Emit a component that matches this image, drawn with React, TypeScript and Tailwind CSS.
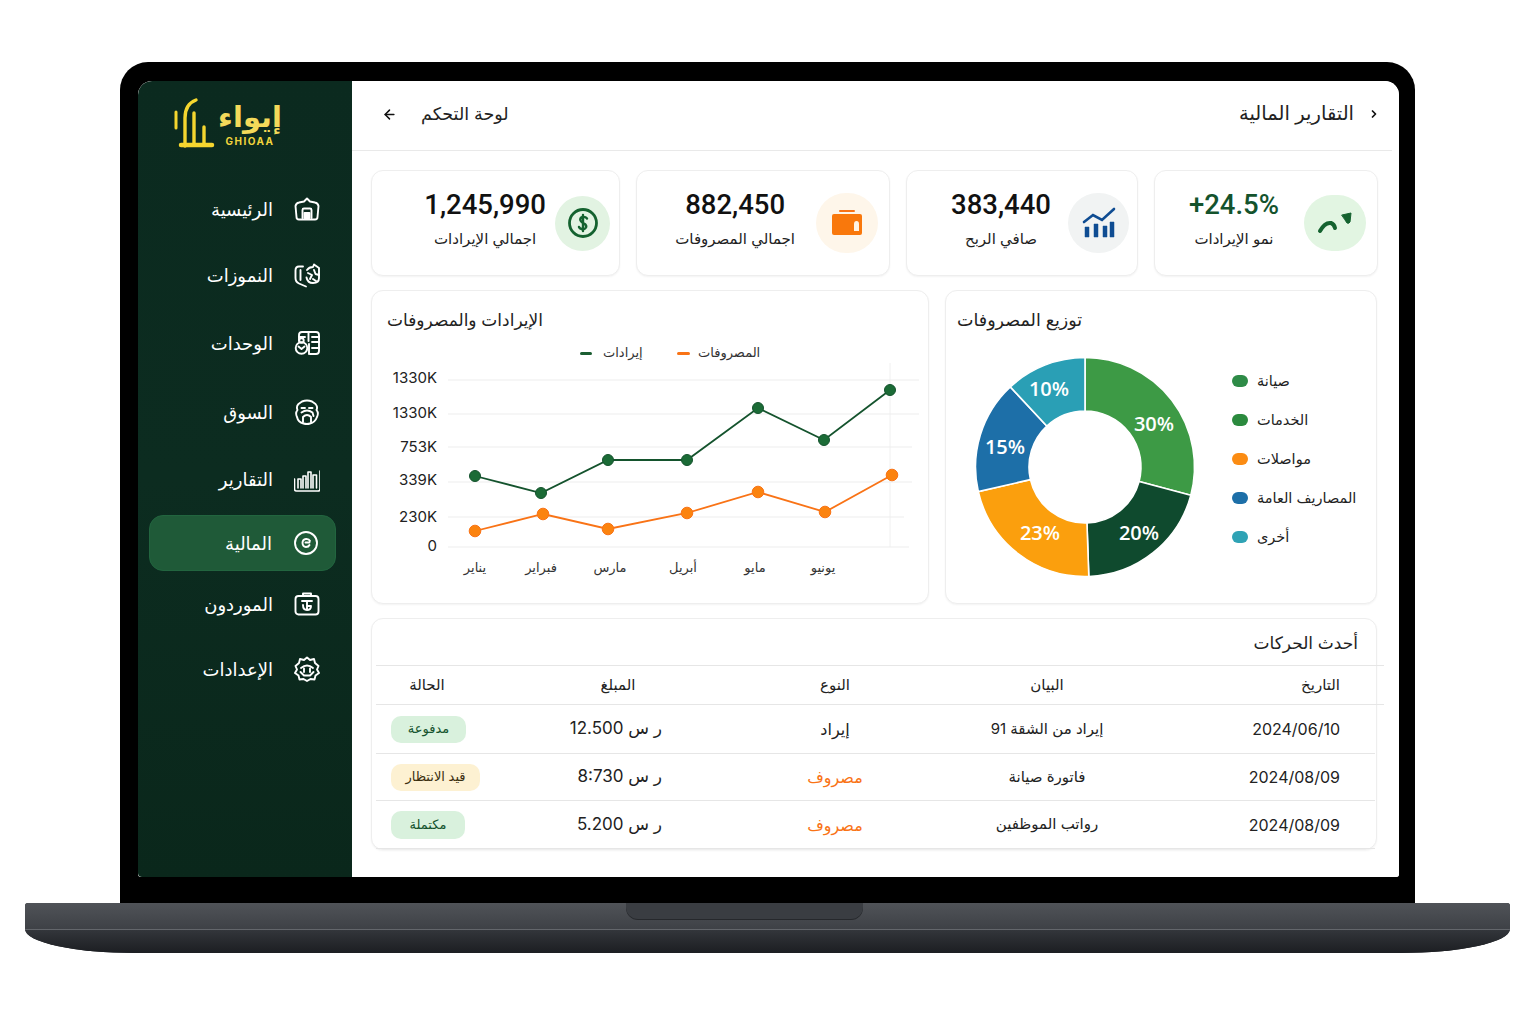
import type { ReactNode } from "react";
import { ArrowLeft, ChevronRight } from "lucide-react";

const navItems = [
  { label: "الرئيسية", icon: "store", row: "h-[64px] pb-[2px]" },
  { label: "النموزات", icon: "globe", row: "h-[66px]" },
  { label: "الوحدات", icon: "units", row: "h-[70px]" },
  { label: "السوق", icon: "market", row: "h-[68px]" },
  { label: "التقارير", icon: "bars", row: "h-[68px] pb-[2px]" },
  { label: "المالية", icon: "finance", row: "mt-px h-[56px] rounded-[14px] border border-[#22653f] bg-[#1f5a38]" },
  { label: "الموردون", icon: "suppliers", row: "h-[66px]" },
  { label: "الإعدادات", icon: "gear", row: "h-[64px]" },
];

function NavIcon({ name }: { name: string }) {
  const common = {
    width: 26,
    height: 26,
    viewBox: "0 0 26 26",
    fill: "none",
    stroke: "white",
    strokeWidth: 1.9,
    strokeLinecap: "round" as const,
    strokeLinejoin: "round" as const,
  };
  if (name === "store")
    return (
      <svg {...common}>
        <path d="M1.5 10Q2 7 5 6.5L10 5.5L13 2.5L16 5.5L21 6.5Q24 7 24.5 10L23.5 21Q23.5 23.5 21 23.5H5Q2.5 23.5 2.5 21Z" />
        <path d="M8.5 22V14Q8.5 12.5 10 12.5H16Q17.5 12.5 17.5 14V22" />
        <path d="M10.5 17H15.5V22H10.5Z" fill="white" />
      </svg>
    );
  if (name === "globe")
    return (
      <svg {...common}>
        <path d="M9 4.5H5Q1.5 4.5 1.5 8.5V16Q1.5 20 5 21.5L12 24.5" />
        <path d="M6.5 8V18" />
        <path d="M13 8Q15 5 19 5L20 2.5L25 6V16Q25 21 19 21Q13.5 21 12.5 15.5" />
        <path d="M14 11L18 13L16 17M20 8L21.5 12L25 13M19 17L22 19" />
      </svg>
    );
  if (name === "units")
    return (
      <svg {...common}>
        <path d="M5 11V5Q5 2 8 2H22Q25 2 25 5V21Q25 24 22 24H16" />
        <path d="M14.5 2V11M15 14V24M5 7H11M18 7H25M18 12H25M18 18H25" />
        <circle cx="7.5" cy="18" r="5.8" />
        <path d="M4.5 16.5L7.5 19L10.5 16.5" />
        <circle cx="7.5" cy="10.5" r="2.2" />
      </svg>
    );
  if (name === "market")
    return (
      <svg {...common}>
        <path d="M8 2.5Q13 0.5 18 2.5L21.5 5Q24 8 22.5 11Q25 14 23 18Q21 23.5 16 24.5Q13 25.5 9.5 24.5Q4 23 3 18Q1 14 3.5 11Q2 7.5 4.5 5Z" />
        <path d="M7.5 9H11M15 9H18.5M7.5 13.5Q13 9.5 18.5 13.5L19.5 17" />
        <path d="M9 23V18Q13 14 17 18V23" />
      </svg>
    );
  if (name === "bars")
    return (
      <svg {...common} strokeWidth={1.6}>
        <path d="M0.5 13V23Q0.5 25 2.5 25H24Q26 25 26 23V5" />
        <path d="M4 22V13H7V22M9 22V10H12V22M14 22V6H17V22M19 22V9H22.5V22" />
      </svg>
    );
  if (name === "finance")
    return (
      <svg {...common}>
        <circle cx="13" cy="13" r="11" />
        <path d="M17 11Q16 8.8 13 9Q9.5 9.5 9.5 13Q9.7 16.8 13 17Q15.5 17 16.5 15M12.5 12.5H16.5" />
      </svg>
    );
  if (name === "suppliers")
    return (
      <svg {...common}>
        <rect x="1.5" y="5" width="23" height="18.5" rx="3" />
        <path d="M9 5V2.5H17V5" />
        <path d="M8 10H18M13 10V19M9 14Q9 19 13 19Q17 19 17 15H13.5" />
      </svg>
    );
  return (
    <svg {...common}>
      <path d="M13 1.5L16 4L20 3L21 7L24.5 10L23 13.5L25 17L21.5 19.5L20.5 23.5L16.5 23L13 25L9.5 23L5.5 23.5L4.5 19.5L1 17L3 13.5L1.5 10L5 7L6 3L10 4Z" />
      <path d="M7 12Q13 7 19 12M6.5 16L10 19.5H16L19.5 16M10 12.5V16M16 12.5V16" />
    </svg>
  );
}

function Sidebar() {
  return (
    <aside className="flex w-[214px] shrink-0 flex-col rounded-tl-[14px] rounded-bl-[4px] bg-gradient-to-b from-[#0b2a1f] via-[#0c2c20] to-[#0a271b]">
      <div className="flex h-[97px] items-start pl-[34px] pt-[15px]">
        <svg width="44" height="56" viewBox="0 0 44 56" fill="none" stroke="#f5d62f" strokeLinecap="round">
          <path d="M4 16V32" strokeWidth="3" />
          <path d="M13 50V22Q13 8 24 4" strokeWidth="3.4" />
          <path d="M22 17V48" strokeWidth="3.4" />
          <path d="M32 31V48" strokeWidth="3.4" />
          <path d="M9 49H40" strokeWidth="4.5" />
        </svg>
        <div className="ml-[4px] flex w-[60px] flex-col items-center">
          <span dir="rtl" className="h-[38px] text-[29px] leading-[42px] font-semibold text-[#f3d95a]">
            إيواء
          </span>
          <span className="mt-px text-[10px] leading-[12px] font-bold tracking-[1.5px] text-[#f0d33c]">GHIOAA</span>
        </div>
      </div>
      <nav className="ml-[11px] mr-[16px] flex flex-col">
        {navItems.map((item) => (
          <div key={item.label} className={`flex items-center justify-end gap-[21px] pr-[16px] ${item.row}`}>
            <span dir="rtl" className="text-[18px] text-white">
              {item.label}
            </span>
            <NavIcon name={item.icon} />
          </div>
        ))}
      </nav>
    </aside>
  );
}

function StatCard({
  value,
  label,
  valueColor,
  gap,
  pad,
  circle,
  icon,
}: {
  value: string;
  label: string;
  valueColor: string;
  gap: string;
  pad: string;
  circle: string;
  icon: ReactNode;
}) {
  return (
    <div className={`flex h-[106px] items-center justify-end rounded-xl border border-[#eeeeee] bg-white shadow-[0_1px_2px_rgba(0,0,0,0.05)] ${gap} ${pad}`}>
      <div className="flex flex-col items-center pb-[9px]">
        <span className={`font-['Roboto',sans-serif] text-[27.5px] leading-[34px] font-medium ${valueColor}`}>{value}</span>
        <span dir="rtl" className="mt-[7px] text-[15px] leading-[20px] text-[#222222]">
          {label}
        </span>
      </div>
      <div className={`flex shrink-0 items-center justify-center rounded-full ${circle}`}>{icon}</div>
    </div>
  );
}

const greenPoints = [
  [475, 476],
  [541, 493],
  [608, 460],
  [687, 460],
  [758, 408],
  [824, 440],
  [890, 390],
];
const orangePoints = [
  [475, 531],
  [543, 514],
  [608, 529],
  [687, 513],
  [758, 492],
  [825, 512],
  [892, 475],
];
const yAxis = [
  { label: "1330K", text: 378, line: 380, from: 448, to: 919 },
  { label: "1330K", text: 413, line: 414, from: 448, to: 919 },
  { label: "753K", text: 447, line: 447, from: 448, to: 912 },
  { label: "339K", text: 480, line: 482, from: 448, to: 912 },
  { label: "230K", text: 517, line: 517, from: 448, to: 904 },
  { label: "0", text: 546, line: 547, from: 448, to: 909 },
];
const months = [
  { label: "يناير", x: 475 },
  { label: "فبراير", x: 541 },
  { label: "مارس", x: 610 },
  { label: "أبريل", x: 683 },
  { label: "مايو", x: 755 },
  { label: "يونيو", x: 823 },
];

// chart svg starts at page x=372, y=363
const toLine = (pts: number[][]) => pts.map(([x, y]) => `${x - 372},${y - 363}`).join(" ");

function LineChart() {
  return (
    <div className="h-[314px] rounded-xl border border-[#eeeeee] bg-white shadow-[0_1px_2px_rgba(0,0,0,0.05)]">
      <div className="flex h-[50px] items-center justify-start pl-[15px] pt-[10px]">
        <span dir="rtl" className="text-[17px] text-[#222222]">
          الإيرادات والمصروفات
        </span>
      </div>
      <div className="flex h-[22px] items-center pl-[208px] pt-[2px]">
        <div className="flex w-[97px] items-center gap-[11px]">
          <span className="h-[3px] w-[12px] rounded-full bg-[#1b5e32]" />
          <span dir="rtl" className="text-[13px] text-[#333333]">
            إيرادات
          </span>
        </div>
        <div className="flex items-center gap-[8px]">
          <span className="h-[3px] w-[13px] rounded-full bg-[#f97316]" />
          <span dir="rtl" className="text-[13px] text-[#333333]">
            المصروفات
          </span>
        </div>
      </div>
      <svg width="556" height="240" viewBox="0 0 556 240" className="block">
        <line x1={518} y1={-16} x2={518} y2={184} stroke="#f0f0f0" />
        {yAxis.map((t, i) => (
          <g key={i}>
            <line x1={t.from - 372} y1={t.line - 363} x2={t.to - 372} y2={t.line - 363} stroke="#ededed" />
            <text x={65} y={t.text - 363 + 5} textAnchor="end" className="fill-[#222222] text-[15px]">
              {t.label}
            </text>
          </g>
        ))}
        {months.map((m) => (
          <text key={m.label} x={m.x - 372} y={209} textAnchor="middle" direction="rtl" className="fill-[#333333] text-[13px]">
            {m.label}
          </text>
        ))}
        <polyline points={toLine(greenPoints)} fill="none" stroke="#14532d" strokeWidth="1.8" />
        <polyline points={toLine(orangePoints)} fill="none" stroke="#f97316" strokeWidth="1.8" />
        {greenPoints.map(([x, y]) => (
          <circle key={x} cx={x - 372} cy={y - 363} r="5.5" fill="#1b6b36" stroke="#14532d" />
        ))}
        {orangePoints.map(([x, y]) => (
          <circle key={x} cx={x - 372} cy={y - 363} r="5.8" fill="#fb830f" stroke="#f97316" />
        ))}
      </svg>
    </div>
  );
}

const slices = [
  { from: 0, to: 105, color: "#3d9a45", text: "30%", x: 184, y: 79 },
  { from: 105, to: 178, color: "#0f4a2e", text: "20%", x: 169, y: 188 },
  { from: 178, to: 257, color: "#fb9f0d", text: "23%", x: 70, y: 188 },
  { from: 257, to: 317, color: "#1d6fa8", text: "15%", x: 35, y: 102 },
  { from: 317, to: 360, color: "#2a9fb5", text: "10%", x: 79, y: 44 },
];

function polar(r: number, deg: number) {
  const a = ((deg - 90) * Math.PI) / 180;
  return `${(115 + r * Math.cos(a)).toFixed(2)} ${(115 + r * Math.sin(a)).toFixed(2)}`;
}

function arcPath(from: number, to: number) {
  const big = to - from > 180 ? 1 : 0;
  return `M${polar(109.5, from)}A109.5 109.5 0 ${big} 1 ${polar(109.5, to)}L${polar(56, to)}A56 56 0 ${big} 0 ${polar(56, from)}Z`;
}

const shareLegend = [
  { label: "صيانة", color: "bg-[#2e8b47]" },
  { label: "الخدمات", color: "bg-[#2b8a3e]" },
  { label: "مواصلات", color: "bg-[#fb8c13]" },
  { label: "المصاريف العامة", color: "bg-[#1d6fa8]" },
  { label: "أخرى", color: "bg-[#2fa3b5]" },
];

function DonutCard() {
  return (
    <div className="h-[314px] rounded-xl border border-[#eeeeee] bg-white shadow-[0_1px_2px_rgba(0,0,0,0.05)]">
      <div className="flex h-[50px] items-center pl-[11px] pt-[8px]">
        <span dir="rtl" className="text-[17.5px] text-[#222222]">
          توزيع المصروفات
        </span>
      </div>
      <div className="flex items-start pl-[24px] pt-[11px]">
        <svg width="230" height="230" viewBox="0 0 230 230">
          {slices.map((s) => (
            <path key={s.text} d={arcPath(s.from, s.to)} fill={s.color} stroke="white" strokeWidth="1.6" />
          ))}
          {slices.map((s) => (
            <text key={s.text} x={s.x} y={s.y} textAnchor="middle" className="fill-white text-[20px] font-semibold font-['Open_Sans',sans-serif]">
              {s.text}
            </text>
          ))}
        </svg>
        <div className="ml-[32px] mt-[9px] flex flex-col">
          {shareLegend.map((l) => (
            <div key={l.label} className="flex h-[39px] items-center gap-[9px]">
              <span className={`h-[12px] w-[16px] rounded-full ${l.color}`} />
              <span dir="rtl" className="text-[14.5px] text-[#222222]">
                {l.label}
              </span>
            </div>
          ))}
        </div>
      </div>
    </div>
  );
}

const rows = [
  {
    date: "2024/06/10",
    desc: "إيراد من الشقة 91",
    type: "إيراد",
    typeColor: "text-[#222222]",
    amount: "ر س 12.500",
    status: "مدفوعة",
    pill: "w-[75px] h-[27px] bg-[#d9f1dd] text-[#14532d]",
    height: "h-[49px]",
  },
  {
    date: "2024/08/09",
    desc: "فاتورة صيانة",
    type: "مصروف",
    typeColor: "text-[#f97316]",
    amount: "ر س 8:730",
    status: "قيد الانتظار",
    pill: "w-[89px] h-[27px] bg-[#fdf1d2] text-[#3b2f10]",
    height: "h-[47px]",
  },
  {
    date: "2024/08/09",
    desc: "رواتب الموظفين",
    type: "مصروف",
    typeColor: "text-[#f97316]",
    amount: "ر س 5.200",
    status: "مكتملة",
    pill: "w-[74px] h-[28px] bg-[#d9f1dd] text-[#14532d]",
    height: "h-[48px]",
  },
];

const rowGrid = "grid grid-cols-[124px_236px_198px_226px_224px] items-center border-[#e6e6e6]";

function RecentTable() {
  return (
    <div className="h-[232px] rounded-xl border border-[#eeeeee] bg-white shadow-[0_1px_2px_rgba(0,0,0,0.05)]">
      <div className="flex h-[46px] items-center justify-end pr-[18px] pt-[3px]">
        <span dir="rtl" className="text-[17px] text-[#222222]">
          أحدث الحركات
        </span>
      </div>
      <div className="ml-[4px] w-[1008px]">
        <div className={`${rowGrid} h-[40px] border-y text-[15px] text-[#222222]`}>
          <span dir="rtl" className="pr-[22px] text-center">الحالة</span>
          <span dir="rtl" className="text-center">المبلغ</span>
          <span dir="rtl" className="text-center">النوع</span>
          <span dir="rtl" className="text-center">البيان</span>
          <span dir="rtl" className="pr-[44px] text-right">التاريخ</span>
        </div>
        {rows.map((r) => (
          <div key={r.amount} className={`${rowGrid} ${r.height} w-[999px] border-b text-[#222222]`}>
            <div className="pl-[15px]">
              <span dir="rtl" className={`flex items-center justify-center rounded-[10px] text-[13px] ${r.pill}`}>
                {r.status}
              </span>
            </div>
            <span dir="rtl" className="pr-[74px] text-right text-[17px]">
              {r.amount}
            </span>
            <span dir="rtl" className={`text-center text-[16px] ${r.typeColor}`}>
              {r.type}
            </span>
            <span dir="rtl" className="text-center text-[15px]">
              {r.desc}
            </span>
            <span className="pr-[44px] text-right text-[16px]">{r.date}</span>
          </div>
        ))}
      </div>
    </div>
  );
}

function Dashboard() {
  return (
    <main className="flex min-w-0 flex-1 flex-col rounded-tr-[14px] bg-white">
      <header className="mr-[7px] flex h-[70px] items-center justify-between border-b border-[#e9e9e9] pb-[3px] pl-[30px] pr-[12px]">
        <div className="flex items-center gap-[24px]">
          <ArrowLeft size={15} strokeWidth={2.4} className="text-[#111111]" />
          <span dir="rtl" className="text-[17.5px] text-[#222222]">
            لوحة التحكم
          </span>
        </div>
        <div className="flex items-center gap-[14px]">
          <span dir="rtl" className="text-[19.5px] text-[#222222]">
            التقارير المالية
          </span>
          <ChevronRight size={12} strokeWidth={3.5} className="text-[#111111]" />
        </div>
      </header>

      <div className="flex flex-col gap-[14px] pl-[19px] pt-[19px]">
        <div className="grid grid-cols-[249px_254px_232px_224px] gap-x-[16px]">
          <StatCard
            value="1,245,990"
            label="اجمالي الإيرادات"
            valueColor="text-[#111111]"
            gap="gap-[9px]"
            pad="pr-[9px]"
            circle="h-[55px] w-[55px] bg-[#e2f3e2]"
            icon={
              <svg width="32" height="32" viewBox="0 0 32 32" fill="none" stroke="#14622f">
                <circle cx="16" cy="16" r="13.5" strokeWidth="2.8" />
                <path d="M20 11.5Q18.5 9.5 15.5 10Q12.5 11 13.5 13.5Q14.5 15.5 17 16.5Q20 18 19 20.5Q17.5 23 14.5 22Q12.5 21.5 12 20M16 8V24" strokeWidth="2.4" strokeLinecap="round" />
              </svg>
            }
          />
          <StatCard
            value="882,450"
            label="اجمالي المصروفات"
            valueColor="text-[#111111]"
            gap="gap-[21px]"
            pad="pr-[11px]"
            circle="h-[60px] w-[62px] bg-[#fef6ea]"
            icon={
              <svg width="32" height="28" viewBox="0 0 32 28">
                <path d="M9 2H23" stroke="#f97316" strokeWidth="2" strokeLinecap="round" />
                <path d="M3 5H29Q31 5 31 7V24Q31 26 29 26H3Q1 26 1 24V7Q1 5 3 5Z" fill="#f9780c" />
                <path d="M23 22V15Q23 12 25.5 12Q28 12 28 15V22Z" fill="#fff3e3" />
              </svg>
            }
          />
          <StatCard
            value="383,440"
            label="صافي الربح"
            valueColor="text-[#111111]"
            gap="gap-[17px]"
            pad="pr-[8px]"
            circle="h-[60px] w-[61px] bg-[#f1f3f3]"
            icon={
              <svg width="34" height="32" viewBox="0 0 34 32" fill="none" stroke="#0f4c92">
                <path d="M2 15L11 8L20 13L32 2" strokeWidth="2.6" strokeLinecap="round" />
                <path d="M3 20H7V30H3ZM12 17H16V30H12ZM21 19H25V30H21ZM28 15H32V30H28Z" fill="#0f4c92" strokeWidth="0.5" />
              </svg>
            }
          />
          <StatCard
            value="+24.5%"
            label="نمو الإيرادات"
            valueColor="text-[#14532d]"
            gap="gap-[25px]"
            pad="pr-[11px]"
            circle="h-[56px] w-[62px] bg-[#e2f5e2]"
            icon={
              <svg width="36" height="24" viewBox="0 0 36 24" fill="none" stroke="#14622f" strokeLinecap="round">
                <path d="M3 20Q8 11 14 12Q17 13 18 17" strokeWidth="4" />
                <path d="M25 4L34 2L33 11Q32 13 30 12L28 9Z" fill="#14622f" strokeWidth="1" />
              </svg>
            }
          />
        </div>

        <div className="grid grid-cols-[558px_432px] gap-x-[16px]">
          <LineChart />
          <DonutCard />
        </div>

        <div className="w-[1006px]">
          <RecentTable />
        </div>
      </div>
    </main>
  );
}

export default function App() {
  return (
    <div className="flex h-[1024px] w-[1536px] flex-col items-start bg-white pt-[62px] font-['Inter','DejaVu_Sans',sans-serif]">
      {/* lid */}
      <div className="ml-[120px] h-[841px] w-[1295px] rounded-t-[28px] bg-black pl-[18px] pt-[19px]">
        <div className="flex h-[796px] w-[1261px] overflow-hidden rounded-t-[14px] rounded-b-[3px] bg-white">
          <Sidebar />
          <Dashboard />
        </div>
      </div>
      {/* base */}
      <div className="ml-[25px] flex h-[50px] w-[1485px] flex-col overflow-hidden rounded-t-[3px] rounded-br-[110px_24px] rounded-bl-[110px_24px] bg-[#22252a]">
        <div className="flex h-[27px] justify-start border-b border-[#63666b] bg-gradient-to-b from-[#505358] to-[#3e4146] pl-[601px]">
          <div className="h-[16px] w-[237px] rounded-b-[12px] bg-[#3a3d42] shadow-[0_1px_0_#26282c]" />
        </div>
        <div className="h-[23px] bg-gradient-to-b from-[#33363b] to-[#1c1e22]" />
      </div>
    </div>
  );
}
